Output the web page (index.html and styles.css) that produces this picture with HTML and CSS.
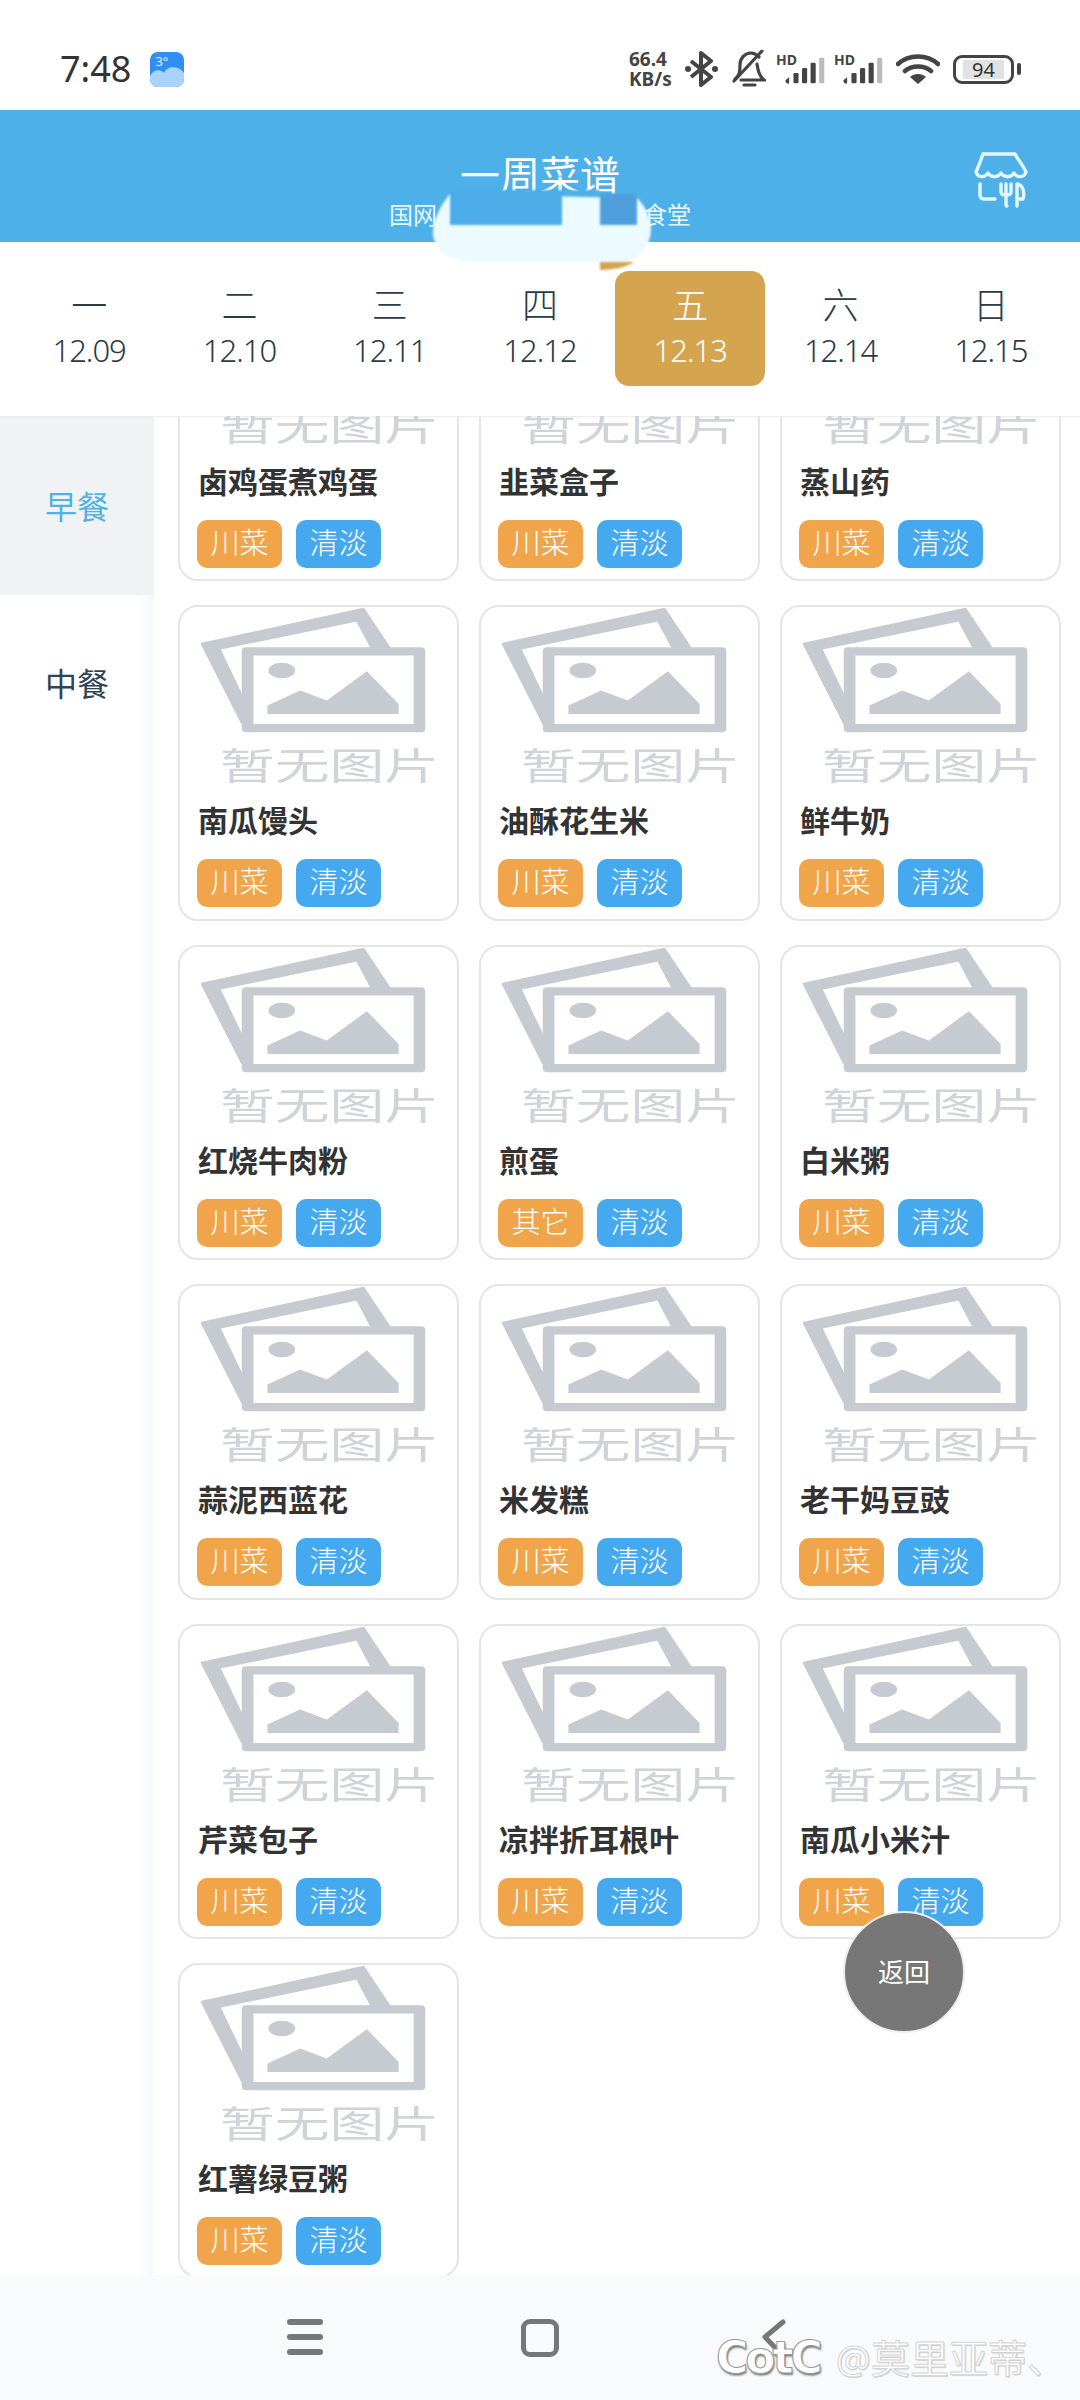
FILE: index.html
```html
<!DOCTYPE html>
<html lang="zh-CN">
<head>
  <meta charset="UTF-8" />
  <meta name="viewport" content="width=device-width, initial-scale=1.0">
  <title>一周菜谱</title>
  <link rel="stylesheet" href="styles.css">
</head>
<body>
  <svg class="defs" width="0" height="0">
    <symbol id="no-pic" viewBox="120 45 680 380">
      <path d="M125 155 L610 50 L690 170 H635 L590 85 L178 170 L245 310 V392 Z" fill="#c6cad1" stroke="#c6cad1" stroke-width="6" stroke-linejoin="round"/>
      <path fill-rule="evenodd" d="M258 165 H782 Q795 165 795 178 V407 Q795 420 782 420 H258 Q245 420 245 407 V178 Q245 165 258 165 Z M280 190 V395 H760 V190 Z" fill="#c6cad1"/>
      <ellipse cx="365" cy="235" rx="40" ry="23" fill="#c6cad1"/>
      <path d="M322 365 V340 L420 295 L500 325 L620 237 L715 335 V365 Z" fill="#c6cad1"/>
    </symbol>
    <symbol id="signal" viewBox="0 0 49 30">
      <path d="M6 30 a3 3 0 0 1 -4 -4 l4 -3 z" fill="#444"/>
      <rect x="11" y="18" width="6" height="12" rx="1.5" fill="#444"/>
      <rect x="21" y="12" width="6" height="18" rx="1.5" fill="#444"/>
      <rect x="31" y="6" width="6" height="24" rx="1.5" fill="#444"/>
      <rect x="41" y="0" width="6" height="30" rx="1.5" fill="#bbb"/>
    </symbol>
  </svg>

  <div class="page">
    <div class="status-bar">
      <div class="status-left">
        <span class="clock">7:48</span>
        <span class="weather">
          <svg width="34" height="35" viewBox="0 0 34 35">
            <path d="M0 24 C4 17 10 17 14 21 C17 14 28 13 34 21 V35 H0 Z" fill="#a9d3fb"/>
          </svg>
          <span class="weather-temp">3°</span>
        </span>
      </div>
      <div class="status-right">
        <div class="speed"><span>66.4</span><span>KB/s</span></div>
        <svg class="ic-bt" width="34" height="36" viewBox="0 0 34 36">
          <path d="M6 10 L26 26 L16 34 V2 L26 10 L6 26" fill="none" stroke="#444" stroke-width="4" stroke-linejoin="round"/>
          <circle cx="3" cy="18" r="3" fill="#444"/><circle cx="30" cy="18" r="3" fill="#444"/>
        </svg>
        <svg class="ic-bell" width="34" height="38" viewBox="0 0 34 38">
          <path d="M3 29 C8 26 8 20 8 15 C8 8 13 3 19 3 C23 3 25 5 27 7 M25 14 C26 20 27 26 32 30 H9" fill="none" stroke="#444" stroke-width="3.2" stroke-linecap="round"/>
          <path d="M2 31 L30 1" stroke="#444" stroke-width="3.2" stroke-linecap="round"/>
          <path d="M12 35 H23" stroke="#444" stroke-width="3.2" stroke-linecap="round"/>
        </svg>
        <div class="sig"><span class="hd">HD</span><svg class="bars" width="42" height="27"><use href="#signal"/></svg></div>
        <div class="sig"><span class="hd">HD</span><svg class="bars" width="42" height="27"><use href="#signal"/></svg></div>
        <svg class="ic-wifi" width="44" height="32" viewBox="0 0 44 32">
          <path d="M2 11 C13 1 31 1 42 11 M9 18 C16 12 28 12 35 18" fill="none" stroke="#444" stroke-width="4.5" stroke-linecap="round"/>
          <path d="M22 31 L14 24 C18 20 26 20 30 24 Z" fill="#444"/>
        </svg>
        <div class="battery"><div class="battery-body"><span class="battery-num">94</span></div><div class="battery-tip"></div></div>
      </div>
    </div>

    <header class="top-bar">
      <div></div>
      <div class="top-title">
        <div class="title">一周菜谱</div>
        <div class="subtitle"><span>国网</span><span>食堂</span></div>
      </div>
      <svg class="ic-store" width="56" height="56" viewBox="0 0 56 56" fill="none" stroke="#e4f7ff" stroke-width="3.4" stroke-linecap="round" stroke-linejoin="round">
        <path d="M9 2 H41 C44 8 49 13 52 20 C50 26 43 26 40 21 C37 26 30 26 27 21 C24 26 17 26 14 21 C11 26 4 26 2 20 C5 13 7 8 9 2 Z"/>
        <path d="M6 32 V43 C6 46 8 47 10 47 H21"/>
        <path d="M27 32 V40 C27 44 37 44 37 40 V32 M32 32 V52 Q32 54 33 54"/>
        <path d="M43 54 V32 C49 33 51 40 49 47 H43"/>
      </svg>
    </header>

    <nav class="week">
      <div class="day"><span class="day-name">一</span><span class="day-date">12.09</span></div>
      <div class="day"><span class="day-name">二</span><span class="day-date">12.10</span></div>
      <div class="day"><span class="day-name">三</span><span class="day-date">12.11</span></div>
      <div class="day"><span class="day-name">四</span><span class="day-date">12.12</span></div>
      <div class="day active"><span class="day-name">五</span><span class="day-date">12.13</span></div>
      <div class="day"><span class="day-name">六</span><span class="day-date">12.14</span></div>
      <div class="day"><span class="day-name">日</span><span class="day-date">12.15</span></div>
    </nav>

    <main class="content">
      <aside class="meals">
        <div class="meal active">早餐</div>
        <div class="meal">中餐</div>
      </aside>
      <section class="dishes">
        <div class="dish-grid">
          <div class="dish"><div class="pic"><svg width="227" height="127"><use href="#no-pic"/></svg><span class="pic-text">暂无图片</span></div><div class="dish-name">卤鸡蛋煮鸡蛋</div><div class="tags"><span class="tag orange">川菜</span><span class="tag blue">清淡</span></div></div>
          <div class="dish"><div class="pic"><svg width="227" height="127"><use href="#no-pic"/></svg><span class="pic-text">暂无图片</span></div><div class="dish-name">韭菜盒子</div><div class="tags"><span class="tag orange">川菜</span><span class="tag blue">清淡</span></div></div>
          <div class="dish"><div class="pic"><svg width="227" height="127"><use href="#no-pic"/></svg><span class="pic-text">暂无图片</span></div><div class="dish-name">蒸山药</div><div class="tags"><span class="tag orange">川菜</span><span class="tag blue">清淡</span></div></div>

          <div class="dish"><div class="pic"><svg width="227" height="127"><use href="#no-pic"/></svg><span class="pic-text">暂无图片</span></div><div class="dish-name">南瓜馒头</div><div class="tags"><span class="tag orange">川菜</span><span class="tag blue">清淡</span></div></div>
          <div class="dish"><div class="pic"><svg width="227" height="127"><use href="#no-pic"/></svg><span class="pic-text">暂无图片</span></div><div class="dish-name">油酥花生米</div><div class="tags"><span class="tag orange">川菜</span><span class="tag blue">清淡</span></div></div>
          <div class="dish"><div class="pic"><svg width="227" height="127"><use href="#no-pic"/></svg><span class="pic-text">暂无图片</span></div><div class="dish-name">鲜牛奶</div><div class="tags"><span class="tag orange">川菜</span><span class="tag blue">清淡</span></div></div>

          <div class="dish"><div class="pic"><svg width="227" height="127"><use href="#no-pic"/></svg><span class="pic-text">暂无图片</span></div><div class="dish-name">红烧牛肉粉</div><div class="tags"><span class="tag orange">川菜</span><span class="tag blue">清淡</span></div></div>
          <div class="dish"><div class="pic"><svg width="227" height="127"><use href="#no-pic"/></svg><span class="pic-text">暂无图片</span></div><div class="dish-name">煎蛋</div><div class="tags"><span class="tag orange">其它</span><span class="tag blue">清淡</span></div></div>
          <div class="dish"><div class="pic"><svg width="227" height="127"><use href="#no-pic"/></svg><span class="pic-text">暂无图片</span></div><div class="dish-name">白米粥</div><div class="tags"><span class="tag orange">川菜</span><span class="tag blue">清淡</span></div></div>

          <div class="dish"><div class="pic"><svg width="227" height="127"><use href="#no-pic"/></svg><span class="pic-text">暂无图片</span></div><div class="dish-name">蒜泥西蓝花</div><div class="tags"><span class="tag orange">川菜</span><span class="tag blue">清淡</span></div></div>
          <div class="dish"><div class="pic"><svg width="227" height="127"><use href="#no-pic"/></svg><span class="pic-text">暂无图片</span></div><div class="dish-name">米发糕</div><div class="tags"><span class="tag orange">川菜</span><span class="tag blue">清淡</span></div></div>
          <div class="dish"><div class="pic"><svg width="227" height="127"><use href="#no-pic"/></svg><span class="pic-text">暂无图片</span></div><div class="dish-name">老干妈豆豉</div><div class="tags"><span class="tag orange">川菜</span><span class="tag blue">清淡</span></div></div>

          <div class="dish"><div class="pic"><svg width="227" height="127"><use href="#no-pic"/></svg><span class="pic-text">暂无图片</span></div><div class="dish-name">芹菜包子</div><div class="tags"><span class="tag orange">川菜</span><span class="tag blue">清淡</span></div></div>
          <div class="dish"><div class="pic"><svg width="227" height="127"><use href="#no-pic"/></svg><span class="pic-text">暂无图片</span></div><div class="dish-name">凉拌折耳根叶</div><div class="tags"><span class="tag orange">川菜</span><span class="tag blue">清淡</span></div></div>
          <div class="dish"><div class="pic"><svg width="227" height="127"><use href="#no-pic"/></svg><span class="pic-text">暂无图片</span></div><div class="dish-name">南瓜小米汁</div><div class="tags"><span class="tag orange">川菜</span><span class="tag blue">清淡</span></div></div>

          <div class="dish"><div class="pic"><svg width="227" height="127"><use href="#no-pic"/></svg><span class="pic-text">暂无图片</span></div><div class="dish-name">红薯绿豆粥</div><div class="tags"><span class="tag orange">川菜</span><span class="tag blue">清淡</span></div></div>
        </div>
      </section>
    </main>

    <footer class="nav-bar">
      <div class="nav-cell"><div class="ic-menu"><i></i><i></i><i></i></div></div>
      <div class="nav-cell"><div class="ic-home"></div></div>
      <div class="nav-cell">
        <svg width="26" height="40" viewBox="0 0 26 40"><path d="M21 3 L3 18 L21 37" fill="none" stroke="#777" stroke-width="5" stroke-linecap="round" stroke-linejoin="round"/></svg>
      </div>
    </footer>

    <!-- smear left over the canteen name in the photo -->
    <svg class="smear" width="240" height="90" viewBox="425 190 240 90">
      <path d="M450 194 L637 198 C645 206 650 216 651 228 C651 245 640 262 620 262 H470 C450 262 436 250 433 236 C432 222 440 206 450 194 Z" fill="#ecfbff"/>
      <rect x="450" y="190" width="112" height="35" fill="#4bace7"/>
      <rect x="562" y="190" width="38" height="5" fill="#4eb0e8"/>
      <rect x="600" y="194" width="37" height="31" fill="#4f9fdc"/>
      <path d="M600 262 H634 C628 267 612 270 600 270 Z" fill="#d4a44f"/>
    </svg>

    <div class="back-btn">返回</div>
    <div class="watermark"><span class="wm-logo">CotC</span><span class="wm-name">@莫里亚蒂、</span></div>
  </div>
</body>
</html>
```

FILE: styles.css
```css
:root {
  --blue: #4eb0e8;
  --gold: #d4a44f;
  --text-color: #2b3b47;
}

* {
  box-sizing: border-box;
}

body {
  margin: 0;
  font-family: "Noto Sans", "Noto Sans CJK SC", sans-serif;
  background: #fff;
}

.defs {
  position: absolute;
}

.page {
  position: relative;
  width: 1080px;
  height: 2400px;
  display: flex;
  flex-direction: column;
  overflow: hidden;
}

/* status bar */
.status-bar {
  height: 110px;
  flex: none;
  display: flex;
  justify-content: space-between;
  align-items: center;
  padding: 28px 59px 0 60px;
  background: #fff;
}

.status-left {
  display: flex;
  align-items: center;
  gap: 19px;
}

.clock {
  font-size: 36px;
  line-height: 40px;
  color: #333;
  font-family: "Noto Sans", sans-serif;
}

.weather {
  position: relative;
  display: block;
  width: 34px;
  height: 35px;
  border-radius: 8px;
  overflow: hidden;
  background: #2f8ff2;
}

.weather svg {
  display: block;
}

.weather-temp {
  position: absolute;
  left: 5px;
  top: 2px;
  font-size: 13px;
  line-height: 15px;
  color: #e4f3ff;
}

.status-right {
  display: flex;
  align-items: center;
}

.speed {
  display: flex;
  flex-direction: column;
  width: 48px;
  font-size: 19px;
  line-height: 20px;
  font-weight: 700;
  color: #444;
  margin-right: 8px;
  white-space: nowrap;
}

.ic-bt {
  margin-right: 13px;
}

.ic-bell {
  margin-right: 10px;
}

.sig {
  position: relative;
  width: 50px;
  height: 30px;
  margin-right: 8px;
}

.hd {
  position: absolute;
  left: 0;
  top: -2px;
  font-size: 14px;
  line-height: 16px;
  font-weight: 700;
  color: #444;
}

.bars {
  position: absolute;
  right: 0;
  bottom: 0;
}

.ic-wifi {
  margin: 0 13px 0 4px;
}

.battery {
  display: flex;
  align-items: center;
  gap: 3px;
}

.battery-body {
  width: 61px;
  height: 29px;
  border: 3px solid #444;
  border-radius: 9px;
  padding: 2px 7px;
}

.battery-num {
  display: block;
  height: 19px;
  background: #e2e2e2;
  font-size: 20px;
  line-height: 19px;
  text-align: center;
  color: #333;
}

.battery-tip {
  width: 4px;
  height: 12px;
  background: #444;
  border-radius: 2px;
}

/* blue header */
.top-bar {
  height: 132px;
  flex: none;
  background: var(--blue);
  display: grid;
  grid-template-columns: 1fr auto 1fr;
  padding: 44px 50px 0 0;
  color: #fff;
}

.top-title {
  width: 302px;
  text-align: center;
  margin-left: 50px;
}

.title {
  font-size: 40px;
  line-height: 42px;
}

.subtitle {
  display: flex;
  justify-content: space-between;
  margin-top: 4px;
  font-size: 24px;
  line-height: 30px;
  color: #e8f7ff;
}

.ic-store {
  justify-self: end;
  margin-top: -2px;
}

/* week strip */
.week {
  height: 174px;
  flex: none;
  display: grid;
  grid-template-columns: repeat(7, 1fr);
  align-items: start;
  padding: 29px 14px 0;
  background: #fff;
  box-shadow: 0 1px 2px #e8e8e8;
  position: relative;
}

.day {
  height: 115px;
  display: flex;
  flex-direction: column;
  align-items: center;
  color: var(--text-color);
  border-radius: 14px;
  padding-top: 12px;
}

.day.active {
  background: var(--gold);
  color: #fff;
}

.day-name {
  font-size: 36px;
  line-height: 46px;
  font-weight: 300;
}

.day-date {
  font-size: 31px;
  line-height: 40px;
  margin-top: 1px;
  font-weight: 300;
  letter-spacing: -1px;
}

/* meals + dishes */
.content {
  flex: 1;
  min-height: 0;
  display: flex;
}

.meals {
  width: 154px;
  flex: none;
  background: linear-gradient(to right, #fff 88%, #f6f8fd);
}

.meal {
  height: 174px;
  display: flex;
  align-items: center;
  justify-content: center;
  font-size: 32px;
  color: #2f4353;
}

.meal.active {
  height: 179px;
  padding-bottom: 2px;
  background: #f1f2f4;
  color: #4db4e0;
}

.dishes {
  flex: 1;
  min-width: 0;
  overflow: hidden;
  padding-left: 24px;
  background: #fff;
}

/* list is scrolled 150px in the shot */
.dish-grid {
  margin-top: -150px;
  display: grid;
  grid-template-columns: repeat(3, 281px);
  grid-auto-rows: 315.4px;
  column-gap: 20px;
  row-gap: 24px;
}

.dish {
  border: 2px solid #e4e5e7;
  border-radius: 20px;
  padding: 0 0 0 17px;
  background: #fff;
}

.pic {
  height: 186px;
  display: flex;
  flex-direction: column;
  margin-left: 3px;
}

.pic-text {
  align-self: flex-start;
  margin: 10px 0 0 20px;
  font-size: 37px;
  line-height: 44px;
  font-weight: 400;
  color: #d0d3d8;
  white-space: nowrap;
  transform: scaleX(1.48);
  transform-origin: left center;
}

.dish-name {
  margin: 0 0 0 1px;
  font-size: 30px;
  line-height: 40px;
  font-weight: 700;
  color: #333;
  white-space: nowrap;
  padding-top: 8px;
  height: 66px;
}

.tags {
  display: flex;
  gap: 14px;
}

.tag {
  width: 85px;
  height: 48px;
  border-radius: 10px;
  font-size: 29px;
  line-height: 46px;
  text-align: center;
  color: #fff;
  font-weight: 300;
}

.tag.orange {
  background: #f0a54a;
}

.tag.blue {
  background: #44a9ef;
}

/* bottom nav */
.nav-bar {
  height: 125px;
  flex: none;
  background: #f9fafc;
  display: grid;
  grid-template-columns: repeat(3, 235px);
  justify-content: center;
  align-items: start;
  padding-top: 44px;
}

.nav-cell {
  display: flex;
  justify-content: center;
}

.ic-menu {
  width: 36px;
  height: 36px;
  display: flex;
  flex-direction: column;
  justify-content: space-between;
}

.ic-menu i {
  display: block;
  height: 6px;
  border-radius: 3px;
  background: #777;
}

.ic-home {
  width: 38px;
  height: 38px;
  border: 5px solid #777;
  border-radius: 9px;
}

/* things lying over the page */
.smear {
  position: absolute;
  left: 425px;
  top: 190px;
  filter: blur(0.8px);
}

.back-btn {
  position: absolute;
  left: 843px;
  top: 1911px;
  width: 122px;
  height: 122px;
  border-radius: 50%;
  border: 2px solid #eee;
  background: #777;
  color: #fff;
  font-size: 26px;
  line-height: 118px;
  text-align: center;
}

.watermark {
  position: absolute;
  left: 716px;
  top: 2328px;
  display: flex;
  align-items: center;
  gap: 16px;
  color: #fff;
  white-space: nowrap;
}

.wm-logo {
  font-family: "DejaVu Sans", sans-serif;
  font-size: 44px;
  line-height: 60px;
  font-weight: 700;
  letter-spacing: -3px;
  -webkit-text-stroke: 1px #999;
  text-shadow: 1px 2px 2px #777;
}

.wm-name {
  font-size: 39px;
  line-height: 50px;
  -webkit-text-stroke: 1px #d4d4d4;
  text-shadow: 1px 1px 1px #ccc;
}
```
